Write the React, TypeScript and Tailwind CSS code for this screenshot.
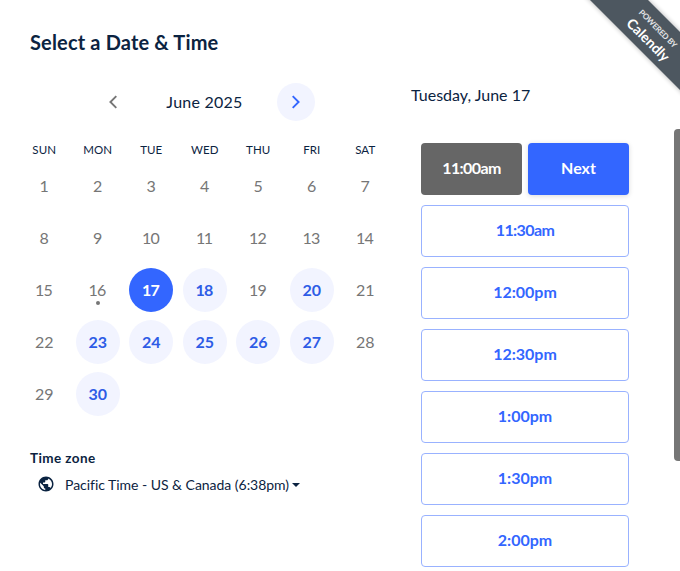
import React from "react";
import { MdPublic } from "react-icons/md";

const WEEKDAYS = ["SUN", "MON", "TUE", "WED", "THU", "FRI", "SAT"];
const DAYS = Array.from({ length: 30 }, (_, i) => i + 1);
const AVAILABLE = new Set([18, 20, 23, 24, 25, 26, 27, 30]);
const SELECTED = 17;
const TODAY = 16;
const TIMES = ["11:30am", "12:00pm", "12:30pm", "1:00pm", "1:30pm", "2:00pm"];

function Chevron({ direction }: { direction: "left" | "right" }) {
  return (
    <svg width="10" height="14" viewBox="0 0 10 14" fill="none" stroke="currentColor" strokeWidth="1.9">
      <path d={direction === "left" ? "M8.3 1.1 2.4 7l5.9 5.9" : "M1.7 1.1 7.6 7l-5.9 5.9"} />
    </svg>
  );
}

function Day({ day }: { day: number }) {
  const tone =
    day === SELECTED
      ? "bg-[#3366ff] text-white font-bold"
      : AVAILABLE.has(day)
        ? "bg-[#f2f4ff] text-[#2e5ce6] font-bold"
        : "text-[#767676]";
  const spacing = day === 11 ? "tracking-[-1.6px] pr-[2px]" : day > 9 && day < 20 ? "tracking-[-0.8px] pr-[1.5px]" : "";
  return (
    <div className="flex h-[52px] items-center justify-center">
      <button className={`relative flex size-11 items-center justify-center rounded-full text-base ${tone} ${spacing}`}>
        {day}
        {day === TODAY && <span className="absolute bottom-[7px] left-5 size-1 rounded-full bg-[#767676]" />}
      </button>
    </div>
  );
}

function Calendar() {
  return (
    <section className="w-[375px]">
      <div className="flex h-[38px] items-center">
        <button className="ml-[77px] flex size-[38px] items-center justify-center text-[#767676]">
          <Chevron direction="left" />
        </button>
        <div className="w-[145px] pb-px text-center text-base tracking-[0.25px]">June 2025</div>
        <button className="flex size-[38px] items-center justify-center rounded-full bg-[#f2f4ff] text-[#3366ff]">
          <Chevron direction="right" />
        </button>
      </div>
      <div className="ml-[0.5px] mt-[19px] grid grid-cols-7 text-center text-[11.5px] leading-[19px] tracking-[0.1px]">
        {WEEKDAYS.map((name) => (
          <div key={name}>{name}</div>
        ))}
      </div>
      <div className="ml-[0.5px] mt-px grid grid-cols-7">
        {DAYS.map((day) => (
          <Day key={day} day={day} />
        ))}
      </div>
      <div className="ml-[13px] mt-7 text-sm leading-5">
        <div className="text-[13.5px] font-bold tracking-[0.4px]">Time zone</div>
        <button className="mt-[7px] flex items-center">
          <MdPublic className="relative -top-px ml-[7px] size-[18px]" />
          <span className="ml-[10px] text-sm tracking-[-0.03px]">Pacific Time - US &amp; Canada (6:38pm)</span>
          <span className="ml-[3px] border-x-4 border-t-4 border-x-transparent border-t-[#0b2341]" />
        </button>
      </div>
    </section>
  );
}

function slotSpacing(time: string) {
  return time.startsWith("11") ? "tracking-[-0.6px]" : "tracking-normal";
}

function TimeSlots() {
  return (
    <section className="ml-[19px] w-[218px]">
      <h2 className="mt-[2px] text-base leading-5">Tuesday, June 17</h2>
      <div className="ml-[10px] mt-[38px] flex flex-col gap-[10px] text-base font-bold">
        <div className="flex gap-[6px]">
          <button className="h-[52px] flex-1 rounded bg-[#666666] pb-0.5 tracking-[-0.6px] text-white">11:00am</button>
          <button className="h-[52px] flex-1 rounded bg-[#3366ff] pb-0.5 text-white shadow-[0_1px_5px_rgba(0,0,0,0.15)]">Next</button>
        </div>
        {TIMES.map((time) => (
          <button key={time} className={`h-[52px] rounded border border-[#99b2ff] pb-0.5 text-[#3366ff] ${slotSpacing(time)}`}>
            {time}
          </button>
        ))}
      </div>
    </section>
  );
}

export default function App() {
  return (
    <main className="relative h-[571px] w-[680px] overflow-hidden bg-white font-['Lato',sans-serif] text-[#0b2341]">
      <h1 className="ml-[30px] pt-[30px] text-xl font-bold leading-6 tracking-[0.16px]">Select a Date &amp; Time</h1>
      <div className="ml-[17px] mt-[29px] flex">
        <Calendar />
        <TimeSlots />
      </div>
      <div className="absolute left-[541px] top-[14px] flex h-[41px] w-[225px] rotate-45 flex-col items-center justify-center bg-[#4d5760] text-white shadow-[0_0_5px_rgba(0,0,0,0.3)]">
        <span className="relative -left-px top-px text-[8px] font-bold leading-[10px] tracking-[-0.25px] text-white/85">POWERED BY</span>
        <span className="relative top-[2px] text-[14px] font-bold leading-[17px]">Calendly</span>
      </div>
      <div className="absolute left-[674px] top-[129px] h-[332px] w-3 rounded bg-[#767676]" />
    </main>
  );
}
